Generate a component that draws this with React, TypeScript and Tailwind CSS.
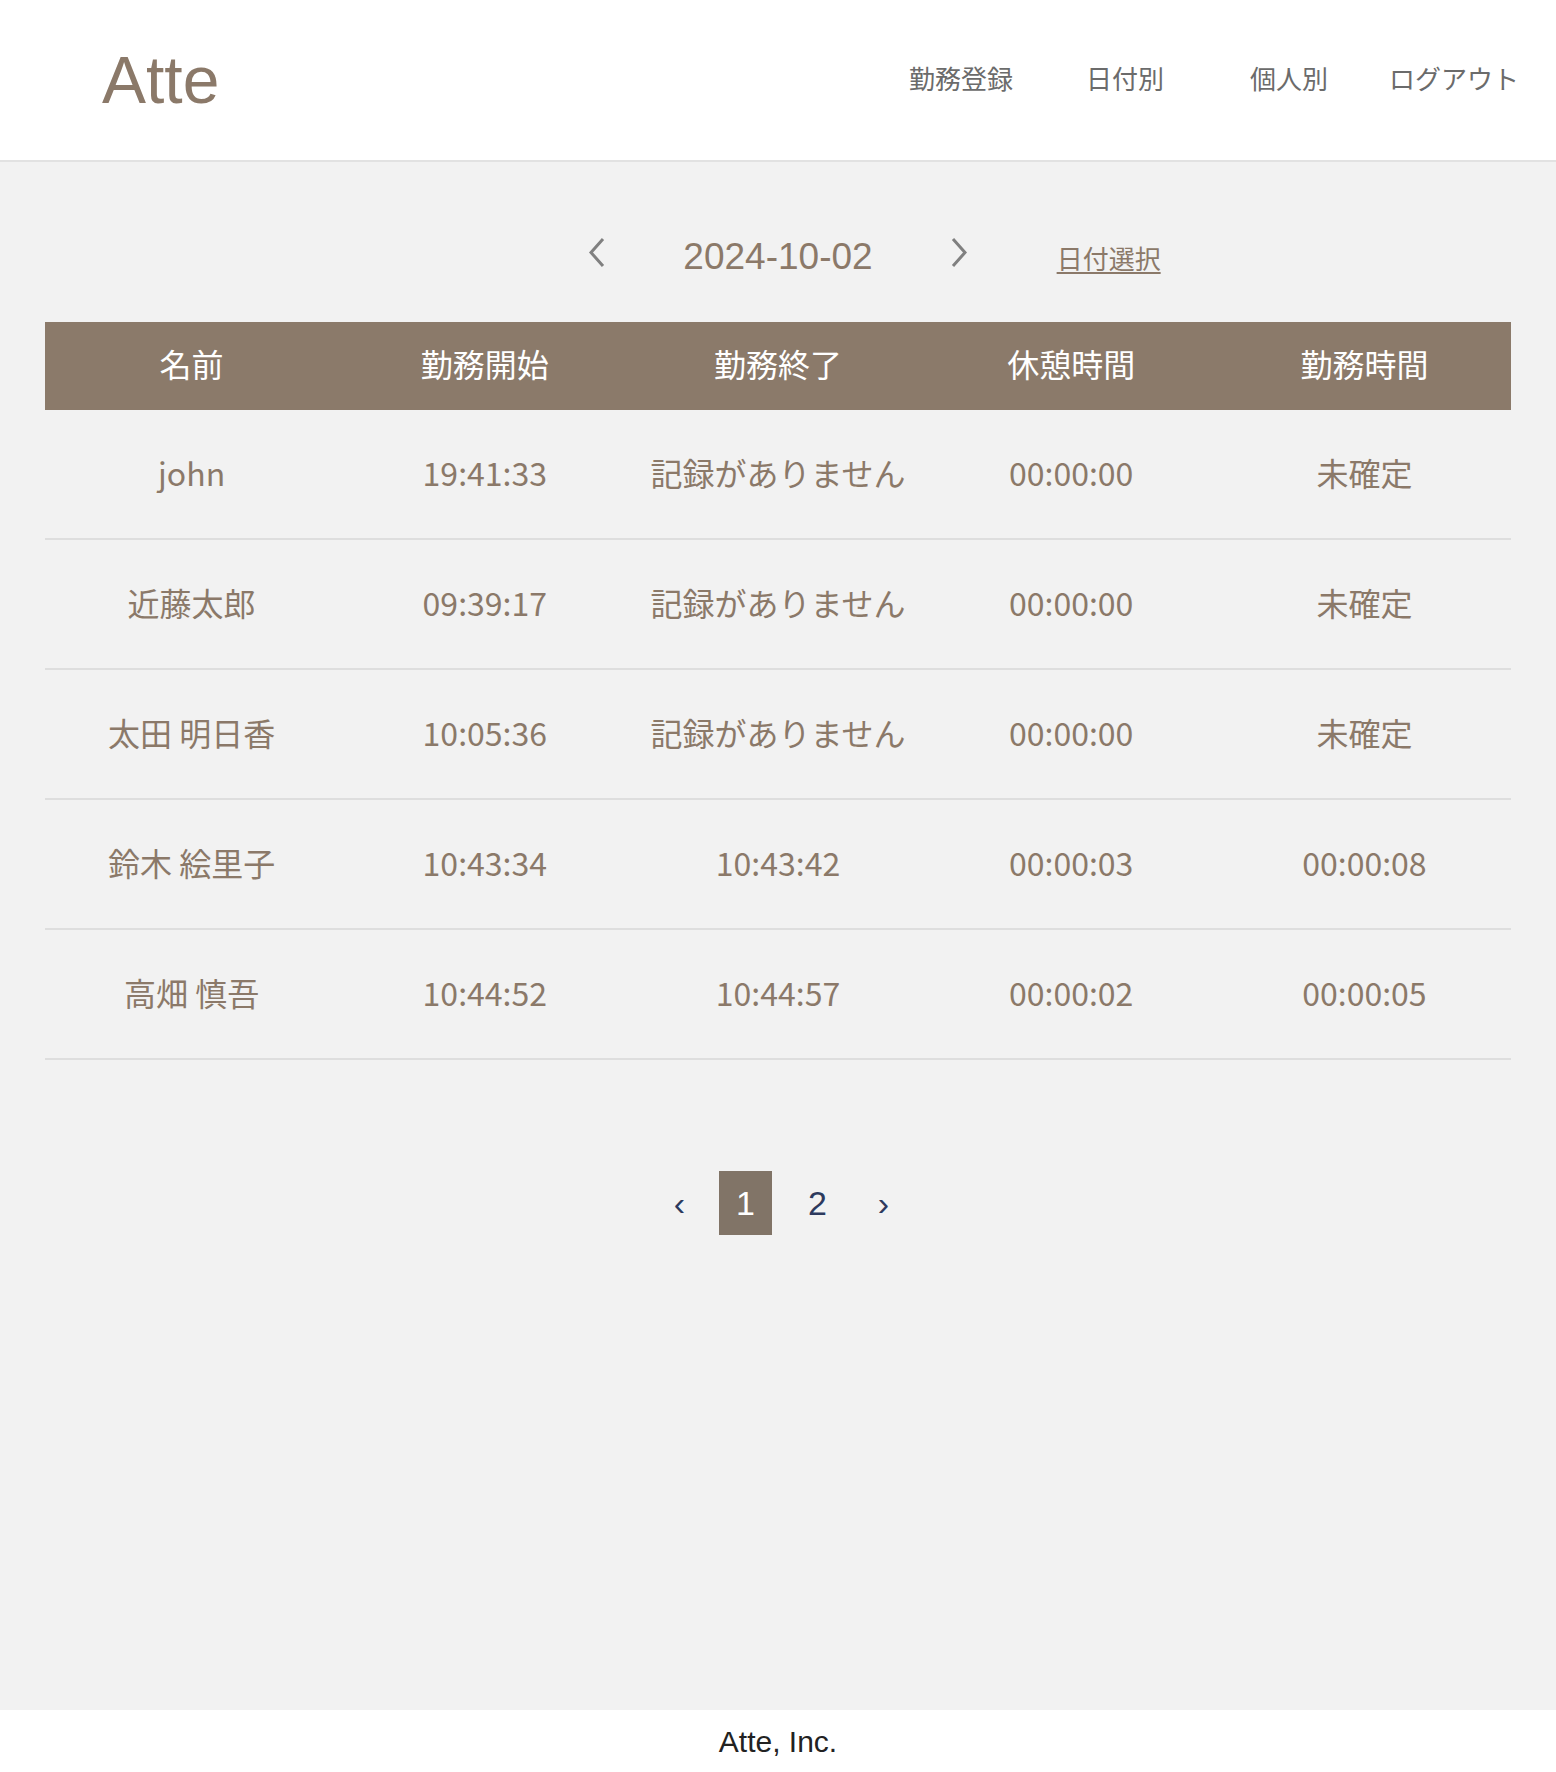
import React from 'react'

type Row = {
  name: string
  start: string
  end: string
  rest: string
  work: string
}

const rows: Row[] = [
  { name: 'john', start: '19:41:33', end: '記録がありません', rest: '00:00:00', work: '未確定' },
  { name: '近藤太郎', start: '09:39:17', end: '記録がありません', rest: '00:00:00', work: '未確定' },
  { name: '太田 明日香', start: '10:05:36', end: '記録がありません', rest: '00:00:00', work: '未確定' },
  { name: '鈴木 絵里子', start: '10:43:34', end: '10:43:42', rest: '00:00:03', work: '00:00:08' },
  { name: '高畑 慎吾', start: '10:44:52', end: '10:44:57', rest: '00:00:02', work: '00:00:05' },
]

const columns = ['名前', '勤務開始', '勤務終了', '休憩時間', '勤務時間']

function Chevron({ dir }: { dir: 'left' | 'right' }) {
  return (
    <svg width="18" height="31" viewBox="0 0 18 31" fill="none" className="block">
      {dir === 'left' ? (
        <polyline points="15,2 3,15.5 15,29" stroke="#808080" strokeWidth="3" />
      ) : (
        <polyline points="3,2 15,15.5 3,29" stroke="#808080" strokeWidth="3" />
      )}
    </svg>
  )
}

export default function App() {
  return (
    <div className="flex min-h-screen flex-col bg-[#f2f2f2]">
      {/* Header */}
      <header className="flex h-[162px] items-center border-b-2 border-[#e2e2e2] bg-white pl-[102px] pr-[37px]">
        <h1 className="text-[66px] leading-none text-[#8b7969] [font-family:'Liberation_Sans',Arial,sans-serif]">
          Atte
        </h1>
        <nav className="ml-auto flex items-center pb-[6px] text-[26px] text-[#6b6b6b] [font-family:'Noto_Sans_CJK_JP',sans-serif]">
          <a>勤務登録</a>
          <a className="ml-[73px]">日付別</a>
          <a className="ml-[86px]">個人別</a>
          <a className="ml-[61px]">ログアウト</a>
        </nav>
      </header>

      {/* Main */}
      <main className="flex-1 pt-[60px]">
        {/* Date switcher */}
        <div className="grid h-[60px] grid-cols-[1fr_auto_1fr] items-center">
          <div />
          <div className="flex items-center">
            <a className="block">
              <Chevron dir="left" />
            </a>
            <span className="mx-[77px] mt-[9px] text-[37px] leading-none text-[#8b7969] [font-family:'Liberation_Sans',Arial,sans-serif]">
              2024-10-02
            </span>
            <a className="block">
              <Chevron dir="right" />
            </a>
          </div>
          <div className="flex items-center">
            <a className="ml-[89px] mt-[11px] text-[26px] leading-none text-[#8b7969] underline underline-offset-[3px] [font-family:'Noto_Sans_CJK_JP',sans-serif]">
              日付選択
            </a>
          </div>
        </div>

        {/* Table */}
        <div className="mx-[45px] mt-[40px] [font-family:'Noto_Sans_CJK_JP',sans-serif]">
          <div className="grid h-[88px] grid-cols-5 items-center bg-[#8b7a6a] pb-[7px] text-[32px] text-white">
            {columns.map((c) => (
              <div key={c} className="text-center">
                {c}
              </div>
            ))}
          </div>
          {rows.map((r) => (
            <div
              key={r.name}
              className="grid h-[130px] grid-cols-5 items-center border-b-2 border-[#dedede] pb-[5px] text-[32px] text-[#8b7969]"
            >
              <div className="text-center">{r.name}</div>
              <div className="text-center">{r.start}</div>
              <div className="text-center">{r.end}</div>
              <div className="text-center">{r.rest}</div>
              <div className="text-center">{r.work}</div>
            </div>
          ))}
        </div>

        {/* Pagination */}
        <div className="mt-[111px] flex justify-center pl-[7px] text-[34px] leading-none [font-family:'Liberation_Sans',Arial,sans-serif]">
          <span className="flex h-[64px] w-[53px] items-center justify-center text-[#2d3a5e]">‹</span>
          <span className="ml-[13px] flex h-[64px] w-[53px] items-center justify-center bg-[#817467] text-white">
            1
          </span>
          <a className="ml-[19px] flex h-[64px] w-[53px] items-center justify-center text-[#2d3a5e]">2</a>
          <a className="ml-[13px] flex h-[64px] w-[53px] items-center justify-center text-[#2d3a5e]">›</a>
        </div>
      </main>

      {/* Footer */}
      <footer className="flex h-[62px] items-center justify-center bg-white text-[30px] text-[#222] [font-family:'Liberation_Sans',Arial,sans-serif]">
        Atte, Inc.
      </footer>
    </div>
  )
}
